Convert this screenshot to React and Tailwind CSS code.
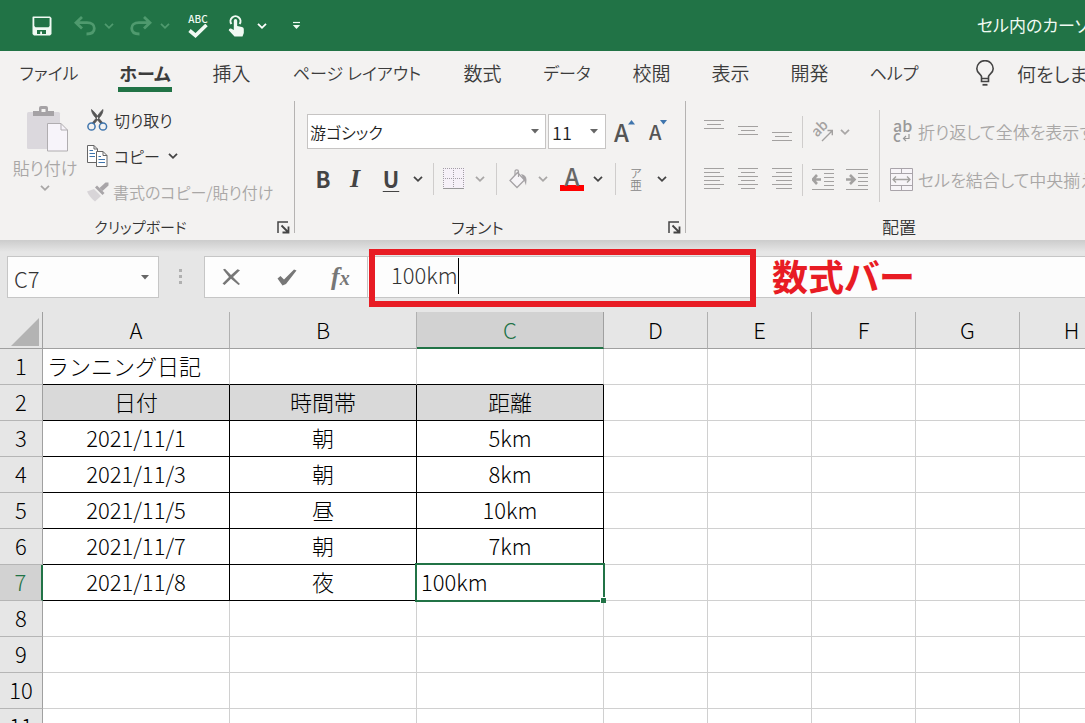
import React from "react";

const FONT = "font-['Noto_Sans_CJK_JP','Noto_Sans',sans-serif]";

function Chevron({ className = "text-[#444]" }) {
  return (
    <svg width="10" height="8" viewBox="0 0 10 8" className={"shrink-0 " + className} aria-hidden="true">
      <path d="M1 1.8 L5 5.8 L9 1.8" fill="none" stroke="currentColor" strokeWidth="1.8" />
    </svg>
  );
}

function Triangle({ className = "" }) {
  return (
    <svg width="8" height="5" viewBox="0 0 8 5" className={"pointer-events-none shrink-0 " + className} aria-hidden="true">
      <path d="M0 0 H8 L4 4.5 Z" fill="#666" />
    </svg>
  );
}

function SaveIcon() {
  return (
    <svg width="20" height="20" viewBox="0 0 20 20" aria-hidden="true">
      <path fillRule="evenodd" d="M1 .5 H18 L19.5 2 V18 L18 19.5 H2 L.5 18 V1 Z M2.3 2 V10 L3.5 11.3 H16.5 L17.6 10 V2 Z M5 14 V18 H8.2 V15.5 H10 V18 H14 V14 Z" fill="#f0faf3" />
    </svg>
  );
}

function UndoIcon({ flip = false }) {
  return (
    <svg width="22" height="20" viewBox="0 0 22 20" className={flip ? "-scale-x-100" : ""} aria-hidden="true">
      <path d="M8 1 L2 6.7 L8 12.5 M2.5 6.7 H13 C18 6.7 20.3 9.2 20.3 12.2 C20.3 15.7 17.5 18 12.5 18" fill="none" stroke="#4f9a6e" strokeWidth="2.8" />
    </svg>
  );
}

function TouchIcon() {
  return (
    <svg width="17" height="22" viewBox="0 0 17 22" aria-hidden="true">
      <path d="M3.4 9 A5 5 0 1 1 11.6 9" fill="none" stroke="#f0faf3" strokeWidth="2" />
      <path d="M5.8 5.8 A1.7 1.7 0 0 1 9.2 5.8 V11 L14 12 Q15.8 12.5 15.8 14 V18 L14.5 21.5 H6.5 L.7 15.2 Q1 13.2 3 13.6 L5.8 15 Z" fill="#f0faf3" />
    </svg>
  );
}

function TitleBar() {
  return (
    <header className="flex h-[51px] shrink-0 items-center overflow-hidden bg-[#217346] pl-8 text-[#f0faf3]">
      <button aria-label="上書き保存"><SaveIcon /></button>
      <button aria-label="元に戻す" className="ml-[22px] flex items-center gap-2 text-[#4f9a6e]">
        <UndoIcon />
        <Chevron className="text-[#4f9a6e]" />
      </button>
      <button aria-label="やり直し" className="ml-4 flex items-center gap-2 text-[#4f9a6e]">
        <UndoIcon flip />
        <Chevron className="text-[#4f9a6e]" />
      </button>
      <button aria-label="スペル チェック" className="ml-[18px] flex flex-col items-center">
        <span className="text-[10px] leading-[10px] font-medium">ABC</span>
        <svg width="20" height="14" viewBox="0 0 20 14" aria-hidden="true">
          <path d="M1.5 6.5 L7.5 11.5 L18.5 1" fill="none" stroke="currentColor" strokeWidth="3.6" />
        </svg>
      </button>
      <button aria-label="タッチ/マウス モードの切り替え" className="ml-5 flex items-center gap-3">
        <TouchIcon />
        <Chevron className="text-white" />
      </button>
      <button aria-label="クイック アクセス ツール バーのユーザー設定" className="ml-[25px]">
        <svg width="9" height="9" viewBox="0 0 9 9" aria-hidden="true">
          <path d="M1 1.5 H8" fill="none" stroke="currentColor" strokeWidth="1.2" />
          <path d="M.8 4 H8.200 L4.500 8 Z" fill="currentColor" />
        </svg>
      </button>
      <h1 className="ml-auto w-[108px] shrink-0 pb-0.5 text-[17px] whitespace-nowrap [font-feature-settings:'palt']">セル内のカーソル移動</h1>
    </header>
  );
}

const KANJI = "text-[19px] w-[39px]";
const TABS = [
  ["ファイル", "text-[17px] w-[58px]"],
  ["ホーム", "text-[18px] w-[54px]"],
  ["挿入", KANJI],
  ["ページ レイアウト", "text-[17px] w-[132px]"],
  ["数式", KANJI],
  ["データ", "text-[17px] w-[50px]"],
  ["校閲", KANJI],
  ["表示", KANJI],
  ["開発", KANJI],
  ["ヘルプ", "text-[17px] w-[50px]"],
];

function Tabs() {
  return (
    <nav className="flex h-[46px] shrink-0 items-start gap-10 overflow-hidden pl-5 text-[19px] leading-[26px] whitespace-nowrap text-[#3c3c3c] [font-feature-settings:'palt']">
      {TABS.map(([name, size]) => (
        <button
          key={name}
          className={
            "mt-[9px] flex shrink-0 justify-center border-b-[5px] pb-px leading-[26px] " +
            size +
            (name === "ホーム" ? " border-[#217346] font-bold" : " border-transparent font-[350]")
          }
        >
          {name}
        </button>
      ))}
      <button className="mt-[9px] ml-4 flex shrink-0 items-center gap-[22px] font-[350]">
        <svg width="20" height="27" viewBox="0 0 20 27" aria-hidden="true">
          <path d="M6.500 19 V16.500 C6 14 1.800 13 1.800 8.800 A8 8 0 0 1 18.200 8.800 C18.200 13 14 14 13.500 16.500 V21.500 H6.500 V18.500 H13.500" fill="none" stroke="#444" strokeWidth="1.600" />
          <path d="M7.500 24.800 H12.500" stroke="#444" strokeWidth="1.800" />
        </svg>
        何をしますか
      </button>
    </nav>
  );
}

function PasteIcon() {
  return (
    <svg width="42" height="46" viewBox="0 0 42 46" aria-hidden="true">
      <rect x="0" y="6" width="33" height="37" rx="1.5" fill="#dbd8dd" />
      <path d="M6 10 V5 H12 V2 Q12 0 14 0 H19 Q21 0 21 2 V5 H27 V10 Z" fill="#a5a2a5" />
      <rect x="14.5" y="3" width="4" height="3" fill="#f3f2f1" />
      <path d="M20.500 17.500 H34 L40.500 24 V45 H20.500 Z" fill="#f7f4fa" stroke="#b0adb0" />
      <path d="M34 17.500 V24 H40.500" fill="none" stroke="#b0adb0" />
    </svg>
  );
}

function CutIcon() {
  return (
    <svg width="21" height="22" viewBox="0 0 21 22" aria-hidden="true">
      <path d="M4.500 .5 C4.500 3 6 6 9 9 L14 15 L15.500 13.500 L12 9.500 C10 6 7 2.500 4.500 .5 Z M16 .5 C16 3 15 6 12 9 L7 15 L5.500 13.500 L9 9.500 C11 6 13.500 2.500 16 .5 Z" fill="#555" stroke="#555" strokeWidth=".8" />
      <circle cx="4.500" cy="17.500" r="3.600" fill="none" stroke="#3f75ad" strokeWidth="1.500" />
      <circle cx="16" cy="17.500" r="3.600" fill="none" stroke="#3f75ad" strokeWidth="1.500" />
    </svg>
  );
}

function CopyIcon() {
  return (
    <svg width="21" height="22" viewBox="0 0 21 22" aria-hidden="true">
      <path d="M.5 .5 H7 L10.500 4 V17.500 H.5 Z" fill="#fff" stroke="#666" />
      <path d="M7 .5 V4 H10.500" fill="none" stroke="#666" />
      <path d="M2.500 5.500 H6 M2.500 8.500 H8 M2.500 11.500 H8" stroke="#3f75ad" />
      <path d="M9.500 6.500 H16 L20 10.500 V21.500 H9.500 Z" fill="#fff" stroke="#666" />
      <path d="M16 6.500 V10.500 H20" fill="none" stroke="#666" />
      <path d="M11.500 11.500 H14 M11.500 14.500 H18 M11.500 17.500 H18" stroke="#3f75ad" />
    </svg>
  );
}

function BrushIcon() {
  return (
    <svg width="22" height="20" viewBox="0 0 22 20" aria-hidden="true">
      <path d="M0 9.500 L7 7 L14 14 L8 19.500 C5 17 1.500 13 0 9.500 Z" fill="#d8d5d8" />
      <path d="M8 5.500 L10 3.500 L17.500 11 L15.500 13 Z" fill="#a8a5a8" />
      <path d="M12.500 6 L18.500 .5 L21.500 .5 V3.500 L15.500 9 Z" fill="#a8a5a8" />
    </svg>
  );
}

function Launcher() {
  return (
    <svg width="13" height="13" viewBox="0 0 13 13" aria-hidden="true">
      <path d="M1 12 V1 H11" fill="none" stroke="#444" strokeWidth="1.500" />
      <path d="M4.500 4.500 L11 11 M11.500 5.500 V11.500 H5.500" fill="none" stroke="#444" strokeWidth="1.800" />
    </svg>
  );
}

function Group({ label, className = "", labelClass, children }) {
  return (
    <section className={"flex shrink-0 flex-col border-r border-[#b5b3b2] " + className}>
      <div className="h-[116px] shrink-0">{children}</div>
      <div className="flex h-5 shrink-0 items-center px-1">
        <span className={"flex-1 text-center leading-5 whitespace-nowrap text-[#333] " + labelClass}>{label}</span>
        <button aria-label={label + "の設定"} className="mt-px"><Launcher /></button>
      </div>
    </section>
  );
}

function ClipboardGroup() {
  return (
    <Group label="クリップボード" labelClass="text-[15px]" className="w-[295px]">
      <div className="flex gap-2.5 pl-[13px] text-[#a9a7a6]">
        <button className="flex w-16 flex-col items-center pt-[5px]">
          <span className="ml-1.5"><PasteIcon /></span>
          <span className="mt-1 text-[17px] leading-6 whitespace-nowrap">貼り付け</span>
          <span className="mt-1"><Chevron className="text-[#a9a7a6]" /></span>
        </button>
        <div className="flex flex-col pt-px text-base whitespace-nowrap text-[#333]">
          <button className="flex h-9 items-center gap-1.5"><CutIcon />切り取り</button>
          <button className="flex h-9 items-center gap-1.5">
            <CopyIcon />コピー<span className="ml-0.5"><Chevron /></span>
          </button>
          <button className="flex h-9 items-center gap-1 text-[#a9a7a6]"><BrushIcon />書式のコピー/貼り付け</button>
        </div>
      </div>
    </Group>
  );
}

function Divider() {
  return <div className="h-8 w-px shrink-0 bg-[#cfcdcc]" />;
}

function BorderIcon() {
  return (
    <svg width="22" height="22" viewBox="0 0 22 22" aria-hidden="true">
      <rect x="0" y="0" width="22" height="21" fill="#f6f1f8" />
      <path d="M.5 0 V20 M10.500 0 V20 M20.500 0 V20 M0 .5 H21 M0 10.500 H21" stroke="#a39fa5" strokeDasharray="1 1" />
      <path d="M0 20.500 H21" stroke="#999" />
    </svg>
  );
}

function BucketIcon() {
  return (
    <svg width="19" height="20" viewBox="0 0 19 20" aria-hidden="true">
      <path d="M8.500 3.500 L15.500 11 L8 18.500 L1 11.500 Z" fill="#f6f4f7" stroke="#a5a2a5" strokeWidth="1.300" />
      <path d="M6 6 V2.500 Q6 .8 7.800 .8 Q9.500 .8 9.500 2.500 V8" fill="none" stroke="#a5a2a5" strokeWidth="1.200" />
      <path d="M12 5 Q17.500 6 17.500 11 L17 16.500 L15 11 Z" fill="#a5a2a5" />
    </svg>
  );
}

function FontGroup() {
  return (
    <Group label="フォント" labelClass="text-base pr-3" className="w-[391px]">
      <div className="flex items-center gap-0.5 pt-[13px] pl-3">
        <div className="flex h-[35px] w-[239px] items-center border border-[#c6c4c3] bg-white pr-1.5">
          <select aria-label="フォント名" className="w-full appearance-none bg-transparent pl-0.5 text-base text-[#222] [font-feature-settings:'palt']">
            <option>游ゴシック</option>
          </select>
          <Triangle />
        </div>
        <div className="flex h-[35px] w-[58px] items-center border border-[#c6c4c3] bg-white pr-[7px]">
          <select aria-label="フォント サイズ" className="w-full appearance-none bg-transparent pl-[3px] text-lg text-[#222]">
            <option>11</option>
          </select>
          <Triangle />
        </div>
        <button aria-label="フォント サイズの拡大" className="ml-1.5 flex text-2xl leading-[35px] font-medium text-[#555]">
          A
          <svg width="7" height="5" viewBox="0 0 7 5" className="mt-1.5 -ml-px" aria-hidden="true"><path d="M3.500 0 L7 4.500 H0 Z" fill="#3f75ad" /></svg>
        </button>
        <button aria-label="フォント サイズの縮小" className="ml-3 flex text-xl leading-[35px] font-medium text-[#555]">
          A
          <svg width="7" height="5" viewBox="0 0 7 5" className="mt-1.5 -ml-px" aria-hidden="true"><path d="M0 0 H7 L3.500 4.500 Z" fill="#3f75ad" /></svg>
        </button>
      </div>
      <div className="mt-3 flex h-9 items-center pl-4 text-[22px] leading-8 text-[#444]">
        <button aria-label="太字" className="mb-0.5 w-6 text-center font-bold">B</button>
        <button aria-label="斜体" className="ml-2 w-6 text-center font-['Liberation_Serif',serif] text-[26px] font-bold italic">I</button>
        <button aria-label="下線" className="ml-3 flex items-center gap-2.5">
          <span className="mb-0.5 w-6 text-center font-bold underline decoration-1 underline-offset-3">U</span>
          <Chevron />
        </button>
        <div className="ml-2.5"><Divider /></div>
        <button aria-label="罫線" className="ml-[9px] flex items-center gap-2.5">
          <BorderIcon /><Chevron className="text-[#a9a7a6]" />
        </button>
        <div className="ml-[11px]"><Divider /></div>
        <button aria-label="塗りつぶしの色" className="ml-3 flex items-center gap-2.5">
          <BucketIcon /><Chevron className="text-[#a9a7a6]" />
        </button>
        <button aria-label="フォントの色" className="ml-3 flex items-center gap-[9px]">
          <span className="flex w-6 flex-col items-center border-b-[6px] border-[#f00] text-2xl leading-[18px] font-medium text-[#666]">A</span>
          <Chevron />
        </button>
        <div className="ml-3"><Divider /></div>
        <button aria-label="ふりがなの表示" className="ml-3.5 flex items-center gap-[15px]">
          <span className="flex flex-col items-center text-xs leading-3 text-[#888]">
            <span>ア</span>
            <span>亜</span>
          </span>
          <Chevron />
        </button>
      </div>
    </Group>
  );
}

const LINES = {
  top: ["M0 2.500 H20 M3 6.500 H17 M0 10.500 H20", "上揃え"],
  middle: ["M0 8.500 H20 M3 12.500 H17 M0 16.500 H20", "上下中央揃え"],
  bottom: ["M0 14.500 H20 M3 18.500 H17 M0 22.500 H20", "下揃え"],
  left: ["M0 2.500 H20 M0 6.500 H16 M0 10.500 H20 M0 14.500 H16 M0 18.500 H20 M0 22.500 H16", "左揃え"],
  center: ["M0 2.500 H20 M3 6.500 H17 M0 10.500 H20 M3 14.500 H17 M0 18.500 H20 M3 22.500 H17", "中央揃え"],
  right: ["M0 2.500 H20 M4 6.500 H20 M0 10.500 H20 M4 14.500 H20 M0 18.500 H20 M4 22.500 H20", "右揃え"],
};

function AlignButton({ kind }) {
  const [d, label] = LINES[kind];
  return (
    <button aria-label={label}>
      <svg width="20" height="28" viewBox="0 0 20 28" aria-hidden="true"><path d={d} stroke="#a3a1a0" /></svg>
    </button>
  );
}

function IndentIcon({ right = false }) {
  return (
    <svg width="22" height="22" viewBox="0 0 22 22" aria-hidden="true">
      <path d="M0 .5 H22 M12 4.500 H22 M12 8.500 H22 M12 12.500 H22 M12 16.500 H22 M0 20.500 H22" stroke="#a3a1a0" />
      <path d={right ? "M0 10.500 H8 M4 6 L8.500 10.500 L4 15" : "M9 10.500 H1 M5 6 L.8 10.500 L5 15"} fill="none" stroke="#a3a1a0" strokeWidth="2.600" />
    </svg>
  );
}

function OrientationIcon() {
  return (
    <svg width="20" height="20" viewBox="0 0 20 20" aria-hidden="true">
      <text x="3" y="14.500" transform="rotate(-45 5 14)" fontSize="14" fill="#a3a1a0" fontWeight="500">ab</text>
      <path d="M9 19 L19 9 M14.500 8.500 H19.300 V13.300" fill="none" stroke="#a3a1a0" strokeWidth="1.400" />
    </svg>
  );
}

function MergeIcon() {
  return (
    <svg width="24" height="24" viewBox="0 0 24 24" aria-hidden="true">
      <path d="M.5 .5 H22.500 V22.500 H.5 Z M.5 5.500 H22.500 M.5 17.500 H22.500 M11.500 .5 V5.500 M11.500 17.500 V22.500" fill="#f7f4f8" stroke="#a9a4aa" />
      <path d="M3 11.500 H20 M6 8.500 L3 11.500 L6 14.500 M17 8.500 L20 11.500 L17 14.500" fill="none" stroke="#a3a1a0" strokeWidth="1.300" />
    </svg>
  );
}

function AlignmentGroup() {
  return (
    <Group label="配置" labelClass="text-[17px]" className="w-[440px]">
      <div className="flex pl-[18px] text-[17px] whitespace-nowrap text-[#a9a7a6]">
        <div className="flex flex-col gap-4 pt-[15px]">
          <div className="flex h-8 items-center">
            <div className="flex gap-3.5"><AlignButton kind="top" /><AlignButton kind="middle" /><AlignButton kind="bottom" /></div>
            <div className="ml-2.5"><Divider /></div>
            <button aria-label="方向" className="ml-2.5 flex items-center gap-[7px]"><OrientationIcon /><Chevron className="text-[#a9a7a6]" /></button>
          </div>
          <div className="flex h-8 items-center">
            <div className="flex gap-3.5"><AlignButton kind="left" /><AlignButton kind="center" /><AlignButton kind="right" /></div>
            <div className="ml-2.5"><Divider /></div>
            <button aria-label="インデントを減らす" className="ml-[9px]"><IndentIcon /></button>
            <button aria-label="インデントを増やす" className="ml-3"><IndentIcon right /></button>
          </div>
        </div>
        <div className="mt-[9px] ml-[11px] h-[92px] w-px bg-[#cfcdcc]" />
        <div className="ml-2.5 flex flex-col gap-4 pt-[15px]">
          <button className="flex h-8 items-center gap-1">
            <svg width="24" height="24" viewBox="0 0 24 24" aria-hidden="true">
              <text x="3" y="12" fontSize="16" fontWeight="500" fill="#999">ab</text>
              <text x="3" y="22" fontSize="15" fontWeight="500" fill="#999">c</text>
              <path d="M19 14 V18.500 H13.500 M16 16 L13.500 18.500 L16 21" fill="none" stroke="#999" strokeWidth="1.200" />
            </svg>
            折り返して全体を表示する
          </button>
          <button className="flex h-8 items-center gap-1"><MergeIcon />セルを結合して中央揃え</button>
        </div>
      </div>
    </Group>
  );
}

function FormulaBar() {
  return (
    <div className="relative flex h-[72px] shrink-0 items-start bg-[linear-gradient(to_bottom,#cccccc_0px,#e6e6e6_12px)] pt-4 pl-[7px]">
      <div className="flex h-[42px] w-[152px] shrink-0 items-center border border-[#c6c6c6] bg-[#fdfdfd] pr-[9px]">
        <input aria-label="名前ボックス" defaultValue="C7" className="w-full min-w-0 bg-transparent pt-0.5 pl-1.5 text-[22px] font-light text-[#333] outline-none" />
        <Triangle />
      </div>
      <div className="mt-[13px] ml-5 flex shrink-0 flex-col gap-[3px]">
        <span className="size-[3px] bg-[#b0b0b0]" />
        <span className="size-[3px] bg-[#b0b0b0]" />
        <span className="size-[3px] bg-[#b0b0b0]" />
      </div>
      <div className="ml-[22px] flex h-[42px] w-[164px] shrink-0 items-center border border-[#c6c6c6] bg-[#fdfdfd] pl-[17px]">
        <button aria-label="キャンセル">
          <svg width="19" height="18" viewBox="0 0 19 18" aria-hidden="true"><path d="M1 1.500 L3 .8 L9 7 L15.500 1.200 L18 2.200 L11 9 L18 16 L16.500 17 L9 10.800 L2.500 17 L.5 15.500 L7 9 Z" fill="#777" /></svg>
        </button>
        <button aria-label="入力" className="ml-9">
          <svg width="20" height="17" viewBox="0 0 20 17" aria-hidden="true"><path d="M.5 9.500 L3.500 7 L7 10.500 L17 .5 L19.500 1.500 L9 15 L5.500 16.500 Z" fill="#777" /></svg>
        </button>
        <button aria-label="関数の挿入" className="ml-[34px] font-['Liberation_Serif',serif] text-[26px] leading-8 font-bold text-[#777] italic">
          f<span className="text-xl">x</span>
        </button>
      </div>
      <input aria-label="数式バー" defaultValue="100km" className="h-[42px] min-w-0 flex-1 border-y border-[#c6c6c6] bg-[#fdfdfd] pb-1.5 pl-[23px] text-[22px] font-light text-[#333] outline-none" />
      <span className="absolute top-[18px] left-[458px] h-9 w-px bg-black" />
      <div className="pointer-events-none absolute top-[9px] left-[369px] h-[58px] w-[387px] border-6 border-[#e81c24]" />
      <strong className="absolute top-2.5 left-[772px] text-[36px] leading-[50px] font-bold whitespace-nowrap text-[#e81c24] [font-feature-settings:'palt']">数式バー</strong>
    </div>
  );
}

const COLUMNS = ["A", "B", "C", "D", "E", "F", "G", "H", "I", "J", "K", "L"];
const ROWS = Array.from({ length: 30 }, (_, i) => i + 1);
const DATA = {
  1: ["ランニング日記"],
  2: ["日付", "時間帯", "距離"],
  3: ["2021/11/1", "朝", "5km"],
  4: ["2021/11/3", "朝", "8km"],
  5: ["2021/11/5", "昼", "10km"],
  6: ["2021/11/7", "朝", "7km"],
  7: ["2021/11/8", "夜", "100km"],
};

function Cell({ row, col }) {
  const text = DATA[row]?.[col] ?? "";
  const boxed = row >= 2 && row <= 7 && col < 3;
  const active = row === 7 && col === 2;
  const bottom = boxed || (row === 1 && col < 3) ? "border-b-black" : "border-b-[#d0d0d0]";
  const right = boxed ? "border-r-black" : "border-r-[#d0d0d0]";
  const align = row === 1 || active ? "pl-1 text-left" : "text-center";
  return (
    <td className={`h-9 border-r border-b pt-0 pb-[3px] whitespace-nowrap ${bottom} ${right} ${align} ${row === 2 && col < 3 ? "bg-[#d9d9d9]" : "bg-white"} ${active ? "relative z-10" : ""}`}>
      {text}
      {active && (
        <span className="absolute -top-0.5 -right-0.5 -bottom-0.5 -left-0.5 border-2 border-[#217346]">
          <span className="absolute -right-[3px] -bottom-[3px] size-1.5 border-t border-l border-white bg-[#217346]" />
        </span>
      )}
    </td>
  );
}

function Sheet() {
  return (
    <main className="min-h-0 flex-1 overflow-hidden bg-[#e6e6e6]">
      <table className="w-max table-fixed border-separate border-spacing-0 text-[22px] leading-8 font-light text-black">
        <colgroup>
          <col className="w-[43px]" />
          {COLUMNS.map((c, i) => <col key={c} className={i < 3 ? "w-[187px]" : "w-[104px]"} />)}
        </colgroup>
        <thead>
          <tr>
            <th className="h-[37px] w-[43px] border-r border-b border-[#a0a0a0] p-0">
              <svg width="28" height="28" viewBox="0 0 28 28" className="mt-1 ml-[11px]" aria-label="すべて選択"><path d="M28 0 V28 H0 Z" fill="#b3b3b3" /></svg>
            </th>
            {COLUMNS.map((c, i) => (
              <th
                key={c}
                scope="col"
                className={`h-[37px] text-center font-light ${i < 3 ? "w-[187px]" : "w-[104px]"} ${c === "C" ? "border-r border-b-2 border-r-[#a0a0a0] border-b-[#217346] bg-[#d2d2d2] pb-0.5 text-[#217346]" : "border-r border-b border-r-[#b0b0b0] border-b-[#a0a0a0] pb-[3px]"}`}
              >
                {c}
              </th>
            ))}
          </tr>
        </thead>
        <tbody>
          {ROWS.map((r) => (
            <tr key={r}>
              <th scope="row" className={`h-9 border-b border-b-[#b5b5b5] pb-[3px] text-center font-light ${r === 7 ? "border-r-2 border-r-[#217346] bg-[#d2d2d2] text-[#217346]" : "border-r border-r-[#a0a0a0]"}`}>{r}</th>
              {COLUMNS.map((c, i) => <Cell key={c} row={r} col={i} />)}
            </tr>
          ))}
        </tbody>
      </table>
    </main>
  );
}

export default function App() {
  return (
    <div className={"flex h-screen flex-col overflow-hidden bg-[#f3f2f1] " + FONT}>
      <TitleBar />
      <Tabs />
      <div className="flex h-[143px] shrink-0 overflow-hidden pt-1 pb-[7px] font-[350] [font-feature-settings:'palt']">
        <ClipboardGroup />
        <FontGroup />
        <AlignmentGroup />
      </div>
      <FormulaBar />
      <Sheet />
    </div>
  );
}
